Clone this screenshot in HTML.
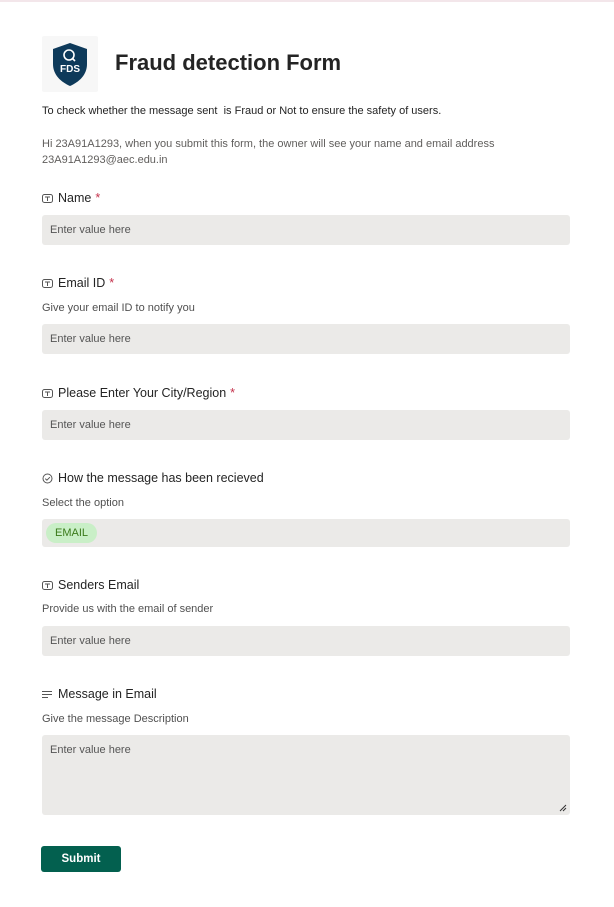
<!DOCTYPE html><html><head><style>
body{margin:0;width:614px;height:907px;background:#fff;font-family:"Liberation Sans",sans-serif;position:relative;overflow:hidden;color:#242424}
.a{position:absolute}
.lbl{position:absolute;left:42px;font-size:12.5px;color:#242424;display:flex;align-items:center}
.lbl svg{margin-right:5px}
.req{color:#c4314b;margin-left:4px}
.sub{position:absolute;left:42px;font-size:11px;color:#505050}
.in{position:absolute;left:42px;width:528px;height:30px;background:#ebeae8;border-radius:3px;font-size:11px;color:#555;box-sizing:border-box;padding:9px 0 0 8px}
</style></head><body>
<div class="a" style="left:0;top:0;width:614px;height:2px;background:#f3e6ea"></div>
<div class="a" style="left:42px;top:36px;width:56px;height:56px;background:#f7f7f7;border-radius:2px">
<svg width="56" height="56" viewBox="0 0 56 56"><path d="M28 7 L45 13 V28 C45 39 37 46 28 50 C19 46 11 39 11 28 V13 Z" fill="#0e3a5a"/><circle cx="27" cy="19" r="5" fill="none" stroke="#fff" stroke-width="1.6"/><line x1="30.5" y1="22.5" x2="33" y2="25" stroke="#fff" stroke-width="1.6"/><text x="28" y="36" text-anchor="middle" font-family="Liberation Sans" font-weight="bold" font-size="10" fill="#fff">FDS</text></svg></div>
<div class="a" style="left:115px;top:50px;font-size:22px;font-weight:bold;color:#242424">Fraud detection Form</div>
<div class="a" style="left:42px;top:105px;font-size:11px;color:#242424">To check whether the message sent &nbsp;is Fraud or Not to ensure the safety of users.</div>
<div class="a" style="left:42px;top:136px;font-size:11px;color:#605e5c;line-height:16px">Hi 23A91A1293, when you submit this form, the owner will see your name and email address<br>23A91A1293@aec.edu.in</div>

<div class="lbl" style="top:191px"><svg width="11" height="9"><rect x=".5" y=".5" width="10" height="8" rx="2" fill="none" stroke="#555"/><path d="M3 3h5M5.5 3v4" stroke="#555"/></svg>Name<span class="req">*</span></div>
<div class="in" style="top:215px">Enter value here</div>

<div class="lbl" style="top:276px"><svg width="11" height="9"><rect x=".5" y=".5" width="10" height="8" rx="2" fill="none" stroke="#555"/><path d="M3 3h5M5.5 3v4" stroke="#555"/></svg>Email ID<span class="req">*</span></div>
<div class="sub" style="top:302px">Give your email ID to notify you</div>
<div class="in" style="top:324px">Enter value here</div>

<div class="lbl" style="top:386px"><svg width="11" height="9"><rect x=".5" y=".5" width="10" height="8" rx="2" fill="none" stroke="#555"/><path d="M3 3h5M5.5 3v4" stroke="#555"/></svg>Please Enter Your City/Region<span class="req">*</span></div>
<div class="in" style="top:410px">Enter value here</div>

<div class="lbl" style="top:471px"><svg width="11" height="11"><circle cx="5.5" cy="5.5" r="4.5" fill="none" stroke="#555"/><path d="M3.3 5.6l1.6 1.6 3-3" fill="none" stroke="#555"/></svg>How the message has been recieved</div>
<div class="sub" style="top:497px">Select the option</div>
<div class="in" style="top:519px;height:28px;padding:0"><span style="position:absolute;left:4px;top:4px;height:20px;width:51px;border-radius:10px;background:#c9efc7;color:#3a7a1a;font-size:11px;text-align:center;line-height:20px">EMAIL</span></div>

<div class="lbl" style="top:578px"><svg width="11" height="9"><rect x=".5" y=".5" width="10" height="8" rx="2" fill="none" stroke="#555"/><path d="M3 3h5M5.5 3v4" stroke="#555"/></svg>Senders Email</div>
<div class="sub" style="top:603px">Provide us with the email of sender</div>
<div class="in" style="top:626px">Enter value here</div>

<div class="lbl" style="top:687px"><svg width="11" height="9"><path d="M0 1.5h10M0 4.5h10M0 7.5h6" stroke="#555"/></svg>Message in Email</div>
<div class="sub" style="top:713px">Give the message Description</div>
<div class="in" style="top:735px;height:80px">Enter value here<svg class="a" style="right:3px;bottom:3px" width="8" height="8"><path d="M1 7L7 1M4 7L7 4" stroke="#333"/></svg></div>

<div class="a" style="left:41px;top:846px;width:80px;height:26px;background:#03604f;border-radius:3px;color:#fff;font-size:11.5px;font-weight:bold;text-align:center;line-height:26px">Submit</div>
</body></html>
